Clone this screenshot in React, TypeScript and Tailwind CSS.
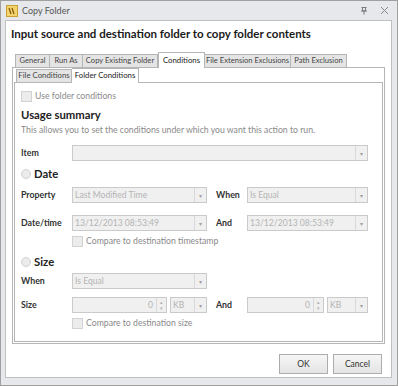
import React from 'react'

const font = { fontFamily: 'Lato, "Noto Sans", sans-serif' }

function Arrow() {
  return (
    <div className="flex h-full w-[12px] items-center justify-center border-l border-[#d9d9d9] text-[6px] text-[#a0a0a0]">
      ▾
    </div>
  )
}

function Select({ value = '', w }: { value?: string; w: string }) {
  return (
    <div className={`flex h-[16px] items-center border border-[#cacaca] bg-[#f0f0f0] ${w}`}>
      <span className="flex-1 truncate whitespace-nowrap pl-[2px] text-[8.6px] leading-[12px] text-[#b4b4b4]">{value}</span>
      <Arrow />
    </div>
  )
}

function NumberBox({ w }: { w: string }) {
  return (
    <div className={`flex h-[16px] items-center border border-[#cacaca] bg-[#f0f0f0] ${w}`}>
      <span className="flex-1 pr-[3px] text-right text-[8.6px] leading-[12px] text-[#b4b4b4]">0</span>
      <div className="flex h-full w-[10px] flex-col items-center justify-center border-l border-[#d9d9d9] text-[5px] leading-[6px] text-[#b0b0b0]">
        <span>▴</span>
        <span>▾</span>
      </div>
    </div>
  )
}

function Check({ label }: { label: string }) {
  return (
    <div className="flex items-center gap-[3px]">
      <div className="h-[11px] w-[11px] border border-[#d2d2d2] bg-[#ececec]" />
      <span className="whitespace-nowrap text-[8.7px] leading-[12px] text-[#8a8a8a]">{label}</span>
    </div>
  )
}

function Label({ children, w = 'w-[51px]' }: { children: React.ReactNode; w?: string }) {
  return (
    <span className={`${w} shrink-0 whitespace-nowrap text-[8.8px] font-bold leading-[12px] text-[#333]`}>
      {children}
    </span>
  )
}

function Radio({ label }: { label: string }) {
  return (
    <div className="flex items-center gap-[3px]">
      <div className="h-[10px] w-[10px] rounded-full border border-[#d2d2d2] bg-[#ebebeb]" />
      <span className="text-[11.3px] font-bold leading-[14px] text-[#222]">{label}</span>
    </div>
  )
}

const tabs = [
  { t: 'General', w: 'w-[35px]' },
  { t: 'Run As', w: 'w-[33px]' },
  { t: 'Copy Existing Folder', w: 'w-[75px]' },
  { t: 'Conditions', w: 'w-[47px]' },
  { t: 'File Extension Exclusions', w: 'w-[86px]' },
  { t: 'Path Exclusion', w: 'w-[56px]' },
]

export default function App() {
  return (
    <div style={font} className="flex h-[386px] w-[398px] flex-col border border-[#a0a0a0] bg-[#e6e8eb]">
      {/* title bar */}
      <div className="flex h-[19px] items-center pl-[5px] pr-[8px]">
        <svg width="12" height="12" viewBox="0 0 12 12">
          <rect x="0.5" y="0.5" width="11" height="11" fill="#f3d36b" stroke="#c9a233" />
          <path d="M3 3 L5 9 M6 3 L8 9" stroke="#8a5a12" strokeWidth="1.3" />
        </svg>
        <span className="ml-[4px] flex-1 text-[9px] text-[#555]">Copy Folder</span>
        <svg className="mr-[12px]" width="8" height="9" viewBox="0 0 8 9">
          <path d="M1.5 1.5 H6.5 M2.5 1.5 V5 H5.5 V1.5 M1 5 H7 M4 5 V8.5" stroke="#7a7a7a" strokeWidth="1" fill="none" />
        </svg>
        <svg width="9" height="9" viewBox="0 0 9 9">
          <path d="M1 1 L8 8 M8 1 L1 8" stroke="#888" strokeWidth="1" />
        </svg>
      </div>

      {/* client */}
      <div className="mx-[4px] flex h-[358px] w-[387px] flex-col border border-[#c0c0c0] bg-white">
        <div className="whitespace-nowrap pl-[5px] pt-[5px] text-[11.5px] font-bold leading-[16px] text-[#1a1a1a]">
          Input source and destination folder to copy folder contents
        </div>

        {/* outer tabs */}
        <div className="ml-[6px] mt-[11px] flex h-[14px] items-end pl-[3px]">
          {tabs.map(({ t, w }, i) => {
            const sel = t === 'Conditions'
            return (
              <div
                key={t}
                className={
                  sel
                    ? `relative z-10 -mb-px flex h-[16px] shrink-0 items-center justify-center whitespace-nowrap border border-b-0 border-[#b5b5b5] bg-white text-[7.8px] leading-none text-[#222] ${w}`
                    : `flex h-[13px] shrink-0 items-center justify-center whitespace-nowrap border border-b-0 border-[#b5b5b5] bg-[#e4e4e4] text-[7.6px] leading-none text-[#444] ${w} ${i === 0 ? '' : 'border-l-0'}`
                }
              >
                {t}
              </div>
            )
          })}
        </div>
        <div className="ml-[6px] flex h-[277px] w-[373px] flex-col border border-[#b5b5b5] bg-white px-[1px]">
          {/* sub tabs */}
          <div className="flex h-[14px] items-end pl-[2px]">
            <div className="flex h-[13px] w-[56px] items-center justify-center whitespace-nowrap border border-b-0 border-[#b5b5b5] bg-[#e4e4e4] text-[7.8px] leading-none text-[#444]">
              File Conditions
            </div>
            <div className="relative z-10 -mb-px flex h-[15px] w-[67px] items-center justify-center whitespace-nowrap border border-l-0 border-b-0 border-[#b5b5b5] bg-white text-[7.8px] leading-none text-[#222]">
              Folder Conditions
            </div>
          </div>
          <div className="flex h-[260px] w-[369px] flex-col border border-[#b5b5b5] bg-white pl-[6px]">
            <div className="mt-[7px] h-[12px]">
              <Check label="Use folder conditions" />
            </div>
            <div className="mt-[6px] text-[11.3px] font-bold leading-[14px] text-[#222]">Usage summary</div>
            <div className="mt-[2px] whitespace-nowrap text-[8.7px] leading-[12px] text-[#8a8a8a]">
              This allows you to set the conditions under which you want this action to run.
            </div>
            <div className="mt-[9px] flex h-[16px] items-center">
              <Label>Item</Label>
              <Select w="w-[296px]" />
            </div>
            <div className="mt-[6px] flex h-[14px] items-center">
              <Radio label="Date" />
            </div>
            <div className="mt-[6px] flex h-[16px] items-center">
              <Label>Property</Label>
              <Select w="w-[135px]" value="Last Modified Time" />
              <Label w="w-[40px] pl-[9px]">When</Label>
              <Select w="w-[121px]" value="Is Equal" />
            </div>
            <div className="mt-[12px] flex h-[16px] items-center">
              <Label>Date/time</Label>
              <Select w="w-[135px]" value="13/12/2013 08:53:49" />
              <Label w="w-[40px] pl-[9px]">And</Label>
              <Select w="w-[121px]" value="13/12/2013 08:53:49" />
            </div>
            <div className="mt-[4px] h-[12px] pl-[51px]">
              <Check label="Compare to destination timestamp" />
            </div>
            <div className="mt-[8px] flex h-[14px] items-center">
              <Radio label="Size" />
            </div>
            <div className="mt-[4px] flex h-[16px] items-center">
              <Label>When</Label>
              <Select w="w-[135px]" value="Is Equal" />
            </div>
            <div className="mt-[8px] flex h-[16px] items-center">
              <Label>Size</Label>
              <NumberBox w="w-[95px]" />
              <div className="ml-[3px]">
                <Select w="w-[37px]" value="KB" />
              </div>
              <Label w="w-[40px] pl-[9px]">And</Label>
              <NumberBox w="w-[77px]" />
              <div className="ml-[3px]">
                <Select w="w-[41px]" value="KB" />
              </div>
            </div>
            <div className="mt-[4px] h-[12px] pl-[51px]">
              <Check label="Compare to destination size" />
            </div>
          </div>
        </div>

        {/* buttons */}
        <div className="mt-[10px] flex justify-end gap-[5px] pr-[9px]">
          <button className="h-[20px] w-[49px] border border-[#acacac] bg-gradient-to-b from-[#f6f6f6] to-[#e4e4e4] text-[8.5px] text-[#333]">
            OK
          </button>
          <button className="h-[20px] w-[49px] border border-[#acacac] bg-gradient-to-b from-[#f6f6f6] to-[#e4e4e4] text-[8.5px] text-[#333]">
            Cancel
          </button>
        </div>
      </div>
    </div>
  )
}
